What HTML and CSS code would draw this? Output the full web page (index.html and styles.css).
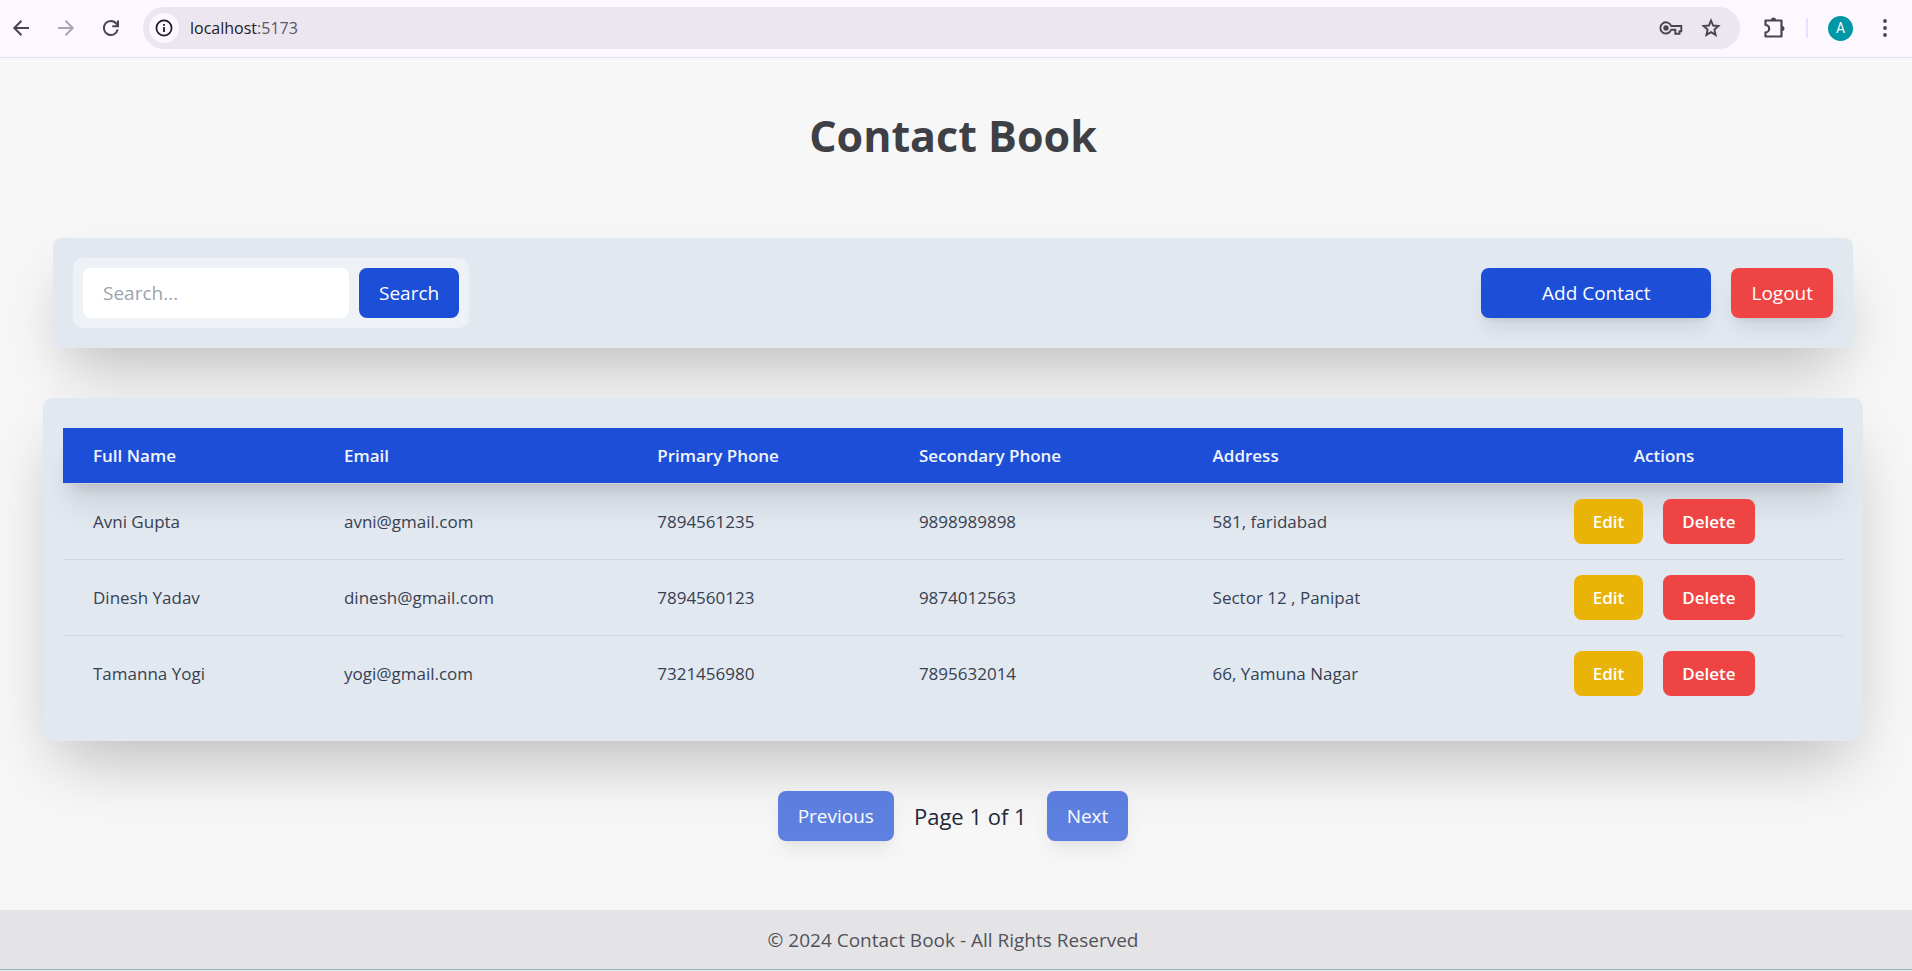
FILE: index.html
```html
<!DOCTYPE html>
<html lang="en">
<head>
<meta charset="utf-8">
<meta name="viewport" content="width=device-width, initial-scale=1">
<title>Contact Book</title>
<link rel="stylesheet" href="styles.css">
</head>
<body>
<div class="browser">
  <nav class="browser-nav" aria-label="Browser">
    <button class="icon-btn" type="button" aria-label="Back">
      <svg width="24" height="24" viewBox="0 0 24 24" fill="none" stroke="#49454f" stroke-width="2"><path d="M20 12H5.500M12.500 4.800L5.300 12l7.200 7.200"/></svg>
    </button>
    <button class="icon-btn" type="button" aria-label="Forward" disabled>
      <svg width="24" height="24" viewBox="0 0 24 24" fill="none" stroke="#aaa5ae" stroke-width="2"><path d="M4 12h14.500M11.500 4.800L18.700 12l-7.200 7.200"/></svg>
    </button>
    <button class="icon-btn" type="button" aria-label="Reload">
      <svg width="24" height="24" viewBox="0 0 24 24" fill="none" stroke="#49454f" stroke-width="2"><path d="M18.700 13.500A7 7 0 1 1 17.500 7.800L19 9.500"/><path d="M19 4.500v5.700h-5.700"/></svg>
    </button>
  </nav>
  <div class="address-bar">
    <button class="site-info" type="button" aria-label="Site information">
      <svg width="18" height="18" viewBox="0 0 18 18"><circle cx="9" cy="9" r="7.600" fill="none" stroke="#1d1b20" stroke-width="1.700"/><path d="M8.100 8h1.800v5H8.100zM8.100 5h1.800v1.800H8.100z" fill="#1d1b20"/></svg>
    </button>
    <span class="url">localhost<span class="url-port">:5173</span></span>
    <button class="icon-btn" type="button" aria-label="Passwords">
      <svg width="24" height="24" viewBox="0 0 24 24"><path d="M12.200 10H22.300v5.200h-1.800v2.600h-4.200v-4h-4.100A5.600 5.600 0 1 1 12.200 10z" fill="none" stroke="#49454f" stroke-width="1.900"/><circle cx="7" cy="12" r="2.700" fill="#49454f"/></svg>
    </button>
    <button class="icon-btn" type="button" aria-label="Bookmark">
      <svg width="24" height="24" viewBox="0 0 24 24"><path d="M12 4.500l2.100 5 5.400.5-4.100 3.600 1.200 5.300L12 16.100l-4.600 2.800 1.200-5.300L4.500 10l5.400-.5z" fill="none" stroke="#49454f" stroke-width="1.900"/></svg>
    </button>
  </div>
  <div class="browser-tools">
    <button class="icon-btn" type="button" aria-label="Extensions">
      <svg width="26" height="26" viewBox="0 0 26 26"><path d="M4.500 5.500H20.500V21.500H4.500V17.300A3.600 3.600 0 0 0 4.500 10z" fill="none" stroke="#49454f" stroke-width="2.200" stroke-linejoin="round"/><path d="M10 5a2.500 2.500 0 0 1 5 0zM21 11a2.500 2.500 0 0 1 0 5z" fill="#49454f"/></svg>
    </button>
    <span class="divider"></span>
    <button class="avatar" type="button" aria-label="Profile">A</button>
    <button class="icon-btn" type="button" aria-label="Menu">
      <svg width="24" height="24" viewBox="0 0 24 24" fill="#49454f"><circle cx="12" cy="5" r="1.900"/><circle cx="12" cy="12" r="1.900"/><circle cx="12" cy="19" r="1.900"/></svg>
    </button>
  </div>
</div>

<main class="page">
  <h1 class="title">Contact Book</h1>

  <section class="toolbar">
    <form class="search">
      <input class="search-input" type="text" placeholder="Search..." aria-label="Search contacts">
      <button class="btn btn-primary" type="button">Search</button>
    </form>
    <div class="toolbar-actions">
      <button class="btn btn-primary btn-wide raised" type="button">Add Contact</button>
      <button class="btn btn-danger raised" type="button">Logout</button>
    </div>
  </section>

  <section class="panel">
    <table class="contacts">
      <colgroup><col class="c-name"><col class="c-email"><col class="c-phone"><col class="c-phone2"><col class="c-address"><col class="c-actions"></colgroup>
      <thead>
        <tr><th>Full Name</th><th>Email</th><th>Primary Phone</th><th>Secondary Phone</th><th>Address</th><th class="center">Actions</th></tr>
      </thead>
      <tbody>
        <tr><td>Avni Gupta</td><td>avni@gmail.com</td><td>7894561235</td><td>9898989898</td><td>581, faridabad</td>
          <td><div class="row-actions"><button class="btn-small btn-edit" type="button">Edit</button><button class="btn-small btn-danger" type="button">Delete</button></div></td></tr>
        <tr><td>Dinesh Yadav</td><td>dinesh@gmail.com</td><td>7894560123</td><td>9874012563</td><td>Sector 12 , Panipat</td>
          <td><div class="row-actions"><button class="btn-small btn-edit" type="button">Edit</button><button class="btn-small btn-danger" type="button">Delete</button></div></td></tr>
        <tr><td>Tamanna Yogi</td><td>yogi@gmail.com</td><td>7321456980</td><td>7895632014</td><td>66, Yamuna Nagar</td>
          <td><div class="row-actions"><button class="btn-small btn-edit" type="button">Edit</button><button class="btn-small btn-danger" type="button">Delete</button></div></td></tr>
      </tbody>
    </table>
  </section>

  <nav class="pager" aria-label="Pagination">
    <button class="btn btn-primary raised" type="button" disabled>Previous</button>
    <span class="page-count">Page 1 of 1</span>
    <button class="btn btn-primary raised" type="button" disabled>Next</button>
  </nav>
</main>

<footer class="footer">© 2024 Contact Book - All Rights Reserved</footer>
</body>
</html>
```
FILE: styles.css
```css
* { box-sizing: border-box; }

body {
  margin: 0;
  min-height: 100vh;
  display: flex;
  flex-direction: column;
  background: #f7f7f7;
  color: #1f2937;
  font-family: "Open Sans", "Noto Sans", sans-serif;
  font-size: 19px;
  line-height: 30px;
}

button, input { font: inherit; border: 0; margin: 0; }
svg { display: block; }

/* Browser bar */
.browser {
  display: flex;
  align-items: center;
  height: 58px;
  padding: 0 15px 1px 9px;
  background: #fdf7ff;
  border-bottom: 1px solid #e7e0ec;
}
.browser-nav { display: flex; gap: 21px; margin-right: 20px; }
.icon-btn { padding: 0; background: none; }
.address-bar {
  flex: 1;
  display: flex;
  align-items: center;
  gap: 16px;
  height: 42px;
  padding: 0 17px 0 6px;
  border-radius: 21px;
  background: #ece6f0;
}
.site-info {
  display: grid;
  place-items: center;
  width: 30px;
  height: 30px;
  padding: 0;
  border-radius: 50%;
  background: #fdf7ff;
}
.url {
  flex: 1;
  margin-left: -5px;
  color: #1d1b20;
  font-size: 16px;
}
.url-port { color: #5b5662; }
.browser-tools { display: flex; align-items: center; margin-left: 21px; }
.divider { width: 2px; height: 20px; margin: 0 20px 0 19px; background: #eaddff; }
.avatar {
  width: 25px;
  height: 25px;
  margin-right: 20px;
  padding: 0;
  border-radius: 50%;
  background: #0097a7;
  color: #fff;
  font: 14px/25px Roboto, sans-serif;
}

/* Page */
.page {
  flex: 1;
  padding: 48px 49px 0 43px;
}
.title {
  margin: 0 0 72px;
  color: #3f3f46;
  font-size: 43px;
  font-weight: 700;
  line-height: 60px;
  text-align: center;
}

.toolbar, .panel {
  background: #e2e8f0;
  box-shadow: 0 31px 62px -15px rgba(0, 0, 0, 0.25);
}
.toolbar {
  display: flex;
  align-items: center;
  justify-content: space-between;
  margin: 0 10px 50px;
  padding: 20px;
  border-radius: 8px;
}
.search {
  display: flex;
  gap: 10px;
  padding: 10px;
  border-radius: 10px;
  background: #eef2f7;
}
.search-input {
  width: 266px;
  height: 50px;
  padding: 0 20px;
  border-radius: 8px;
  background: #fff;
  color: #1f2937;
}
.search-input::placeholder { color: #9ca3af; opacity: 1; }
.toolbar-actions { display: flex; gap: 20px; }

.btn {
  height: 50px;
  padding: 10px 20px;
  border-radius: 8px;
  color: #fff;
  font-weight: 500;
}
.btn-primary { background: #1d4ed8; }
.btn-danger { background: #ef4444; }
.btn-edit { background: #eab308; }
.btn-wide { padding: 10px 61px; }
.btn:disabled { opacity: 0.7; }
.raised { box-shadow: 0 12px 19px -4px rgba(0, 0, 0, 0.1), 0 5px 7px -5px rgba(0, 0, 0, 0.1); }

.panel { padding: 30px 20px; border-radius: 10px; }
.contacts {
  width: 100%;
  table-layout: fixed;
  border-collapse: collapse;
  text-align: left;
  font-size: 17px;
  line-height: 25px;
}
.c-name { width: 14.1%; }
.c-email { width: 17.6%; }
.c-phone { width: 14.7%; }
.c-phone2 { width: 16.5%; }
.c-address { width: 17%; }
.c-actions { width: 20.1%; }
.contacts thead {
  background: #1d4ed8;
  color: #f1f5f9;
  box-shadow: 0 25px 31px -6px rgba(0, 0, 0, 0.1), 0 10px 12px -7px rgba(0, 0, 0, 0.12);
}
.contacts th { padding: 15px 30px; font-weight: 600; }
.contacts .center { text-align: center; }
.contacts td {
  padding: 15px 30px;
  border-top: 1px solid #d1d5db;
  color: #374151;
  font-weight: 500;
}
.row-actions { display: flex; justify-content: center; gap: 20px; }
.btn-small {
  padding: 10px 19px;
  border-radius: 8px;
  color: #fff;
  font-weight: 600;
}

.pager {
  display: flex;
  align-items: center;
  justify-content: center;
  gap: 20px;
  margin-top: 50px;
}
.page-count { font-size: 22px; }

.footer {
  padding: 15px 6px 15px 0;
  border-bottom: 1px solid #cfe8ea;
  background: #e4e4e7;
  box-shadow: inset 0 -1px #9fb4b6;
  color: #52525b;
  text-align: center;
}
```
